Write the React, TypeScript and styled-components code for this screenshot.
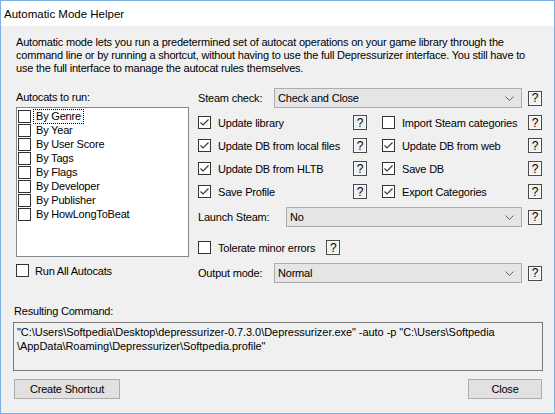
import React from "react";
import styled, { createGlobalStyle } from "styled-components";

const GlobalStyle = createGlobalStyle`
  html, body {
    margin: 0;
    padding: 0;
    background: #ffffff;
  }
  body {
    font-family: "Liberation Sans", Arial, sans-serif;
    font-size: 11px;
    letter-spacing: -0.2px;
    color: #000;
  }
`;

const Window = styled.div`
  width: 555px;
  height: 414px;
  box-sizing: border-box;
  border: 1px solid #7fb0e3;
  display: flex;
  flex-direction: column;
  background: #f0f0f0;
`;

const TitleBar = styled.div`
  height: 25px;
  background: #ffffff;
  display: flex;
  align-items: center;
  padding-left: 3px;
  font-size: 11.5px;
  letter-spacing: 0;
`;

const Content = styled.div`
  flex: 1;
  display: flex;
  flex-direction: column;
  padding: 10px 11px 0 0;
`;

const Description = styled.div`
  padding-left: 15px;
  line-height: 13px;
  white-space: nowrap;
`;

const Main = styled.div`
  display: flex;
  margin-top: 13px;
  padding-left: 15px;
`;

const LeftCol = styled.div`
  width: 173px;
  margin-right: 9px;
  display: flex;
  flex-direction: column;
`;

const Label = styled.div<{ $width?: number }>`
  line-height: 13px;
  white-space: nowrap;
  flex: none;
  width: ${({ $width }) => ($width ? `${$width}px` : "auto")};
`;

const ListBox = styled.div`
  margin-top: 3px;
  height: 150px;
  box-sizing: border-box;
  border: 1px solid #828790;
  background: #ffffff;
  padding: 1px;
`;

const ListItem = styled.div`
  height: 14px;
  display: flex;
  align-items: center;
  gap: 3px;
`;

const ItemText = styled.span<{ $focused?: boolean }>`
  padding: 0 2px;
  line-height: 13px;
  outline: ${({ $focused }) => ($focused ? "1px dotted #000" : "none")};
`;

const CheckRow = styled.div<{ $top?: number; $height?: number }>`
  display: flex;
  align-items: center;
  margin-top: ${({ $top }) => $top ?? 0}px;
  height: ${({ $height }) => $height ?? 13}px;
`;

const CheckLabel = styled.span<{ $gap?: number }>`
  margin-left: ${({ $gap }) => $gap ?? 7}px;
  white-space: nowrap;
`;

const BoxShape = styled.span`
  width: 13px;
  height: 13px;
  box-sizing: border-box;
  border: 1px solid #333333;
  background: #ffffff;
  flex: none;
  display: inline-flex;
  align-items: center;
  justify-content: center;
`;

const RightCol = styled.div`
  width: 344px;
  display: flex;
  flex-direction: column;
`;

const FieldRow = styled.div<{ $top?: number }>`
  display: flex;
  align-items: center;
  height: 20px;
  margin-top: ${({ $top }) => $top ?? 0}px;
`;

const Combo = styled.div`
  flex: 1;
  height: 20px;
  box-sizing: border-box;
  border: 1px solid #adadad;
  background: #e5e5e5;
  display: flex;
  align-items: center;
  padding: 0 7px 0 3px;
  justify-content: space-between;
`;

const HelpButton = styled.span<{ $left?: number }>`
  width: 14px;
  height: 15px;
  box-sizing: border-box;
  border: 1px solid #4a4a4a;
  box-shadow: inset 0 0 0 1px #fbfbfb;
  background: #f0f0f0;
  display: inline-flex;
  align-items: center;
  justify-content: center;
  font-size: 12px;
  letter-spacing: 0;
  line-height: 1;
  flex: none;
  margin-left: ${({ $left }) => ($left !== undefined ? `${$left}px` : "auto")};
`;

const OptionGrid = styled.div`
  margin-top: 3px;
  display: grid;
  grid-template-columns: 169px 160px;
  column-gap: 15px;
  grid-auto-rows: 23px;
`;

const OptionCell = styled.div`
  display: flex;
  align-items: center;
`;

const ResultLabel = styled.div`
  margin-top: 22px;
  padding-left: 13px;
  line-height: 13px;
`;

const CommandBox = styled.div`
  margin: 4px 0 0 12px;
  height: 49px;
  box-sizing: border-box;
  border: 1px solid #7a7a7a;
  background: #f0f0f0;
  padding: 2px 3px 0 3px;
  line-height: 14px;
  letter-spacing: -0.05px;
  white-space: nowrap;
  overflow: hidden;
`;

const ButtonRow = styled.div`
  margin: 8px 1px 0 13px;
  display: flex;
  justify-content: space-between;
`;

const Button = styled.div<{ $width: number }>`
  width: ${({ $width }) => $width}px;
  height: 20px;
  box-sizing: border-box;
  border: 1px solid #adadad;
  background: #e1e1e1;
  display: flex;
  align-items: center;
  justify-content: center;
`;

const CheckBox = ({ checked }: { checked?: boolean }) => (
  <BoxShape>
    {checked && (
      <svg width="11" height="11" viewBox="0 0 11 11">
        <path d="M1.5 5.5 L4 8 L9.5 2.5" fill="none" stroke="#333" strokeWidth="1.1" />
      </svg>
    )}
  </BoxShape>
);

const Chevron = () => (
  <svg width="9" height="5" viewBox="0 0 9 5">
    <path d="M0.5 0.5 L4.5 4.5 L8.5 0.5" fill="none" stroke="#606060" strokeWidth="1" />
  </svg>
);

const autocats = [
  "By Genre",
  "By Year",
  "By User Score",
  "By Tags",
  "By Flags",
  "By Developer",
  "By Publisher",
  "By HowLongToBeat",
];

const options: [string, boolean][] = [
  ["Update library", true],
  ["Import Steam categories", false],
  ["Update DB from local files", true],
  ["Update DB from web", true],
  ["Update DB from HLTB", true],
  ["Save DB", true],
  ["Save Profile", true],
  ["Export Categories", true],
];

const App = () => (
  <>
    <GlobalStyle />
    <Window>
      <TitleBar>Automatic Mode Helper</TitleBar>
      <Content>
        <Description>
          Automatic mode lets you run a predetermined set of autocat operations on your game library through the
          <br />
          command line or by running a shortcut, without having to use the full Depressurizer interface. You still have to
          <br />
          use the full interface to manage the autocat rules themselves.
        </Description>
        <Main>
          <LeftCol>
            <Label style={{ marginTop: 3 }}>Autocats to run:</Label>
            <ListBox>
              {autocats.map((name, i) => (
                <ListItem key={name}>
                  <CheckBox />
                  <ItemText $focused={i === 0}>{name}</ItemText>
                </ListItem>
              ))}
            </ListBox>
            <CheckRow $top={7}>
              <CheckBox />
              <CheckLabel $gap={6}>Run All Autocats</CheckLabel>
            </CheckRow>
          </LeftCol>
          <RightCol>
            <FieldRow>
              <Label $width={76}>Steam check:</Label>
              <Combo>
                <span>Check and Close</span>
                <Chevron />
              </Combo>
              <HelpButton $left={6}>?</HelpButton>
            </FieldRow>
            <OptionGrid>
              {options.map(([label, checked]) => (
                <OptionCell key={label}>
                  <CheckBox checked={checked} />
                  <CheckLabel>{label}</CheckLabel>
                  <HelpButton>?</HelpButton>
                </OptionCell>
              ))}
            </OptionGrid>
            <FieldRow $top={4}>
              <Label $width={88}>Launch Steam:</Label>
              <Combo>
                <span>No</span>
                <Chevron />
              </Combo>
              <HelpButton $left={6}>?</HelpButton>
            </FieldRow>
            <CheckRow $top={13} $height={15}>
              <CheckBox />
              <CheckLabel>Tolerate minor errors</CheckLabel>
              <HelpButton $left={11}>?</HelpButton>
            </CheckRow>
            <FieldRow $top={8}>
              <Label $width={76}>Output mode:</Label>
              <Combo>
                <span>Normal</span>
                <Chevron />
              </Combo>
              <HelpButton $left={6}>?</HelpButton>
            </FieldRow>
          </RightCol>
        </Main>
        <ResultLabel>Resulting Command:</ResultLabel>
        <CommandBox>
          "C:\Users\Softpedia\Desktop\depressurizer-0.7.3.0\Depressurizer.exe" -auto -p "C:\Users\Softpedia
          <br />
          \AppData\Roaming\Depressurizer\Softpedia.profile"
        </CommandBox>
        <ButtonRow>
          <Button $width={106}>Create Shortcut</Button>
          <Button $width={74}>Close</Button>
        </ButtonRow>
      </Content>
    </Window>
  </>
);

export default App;
